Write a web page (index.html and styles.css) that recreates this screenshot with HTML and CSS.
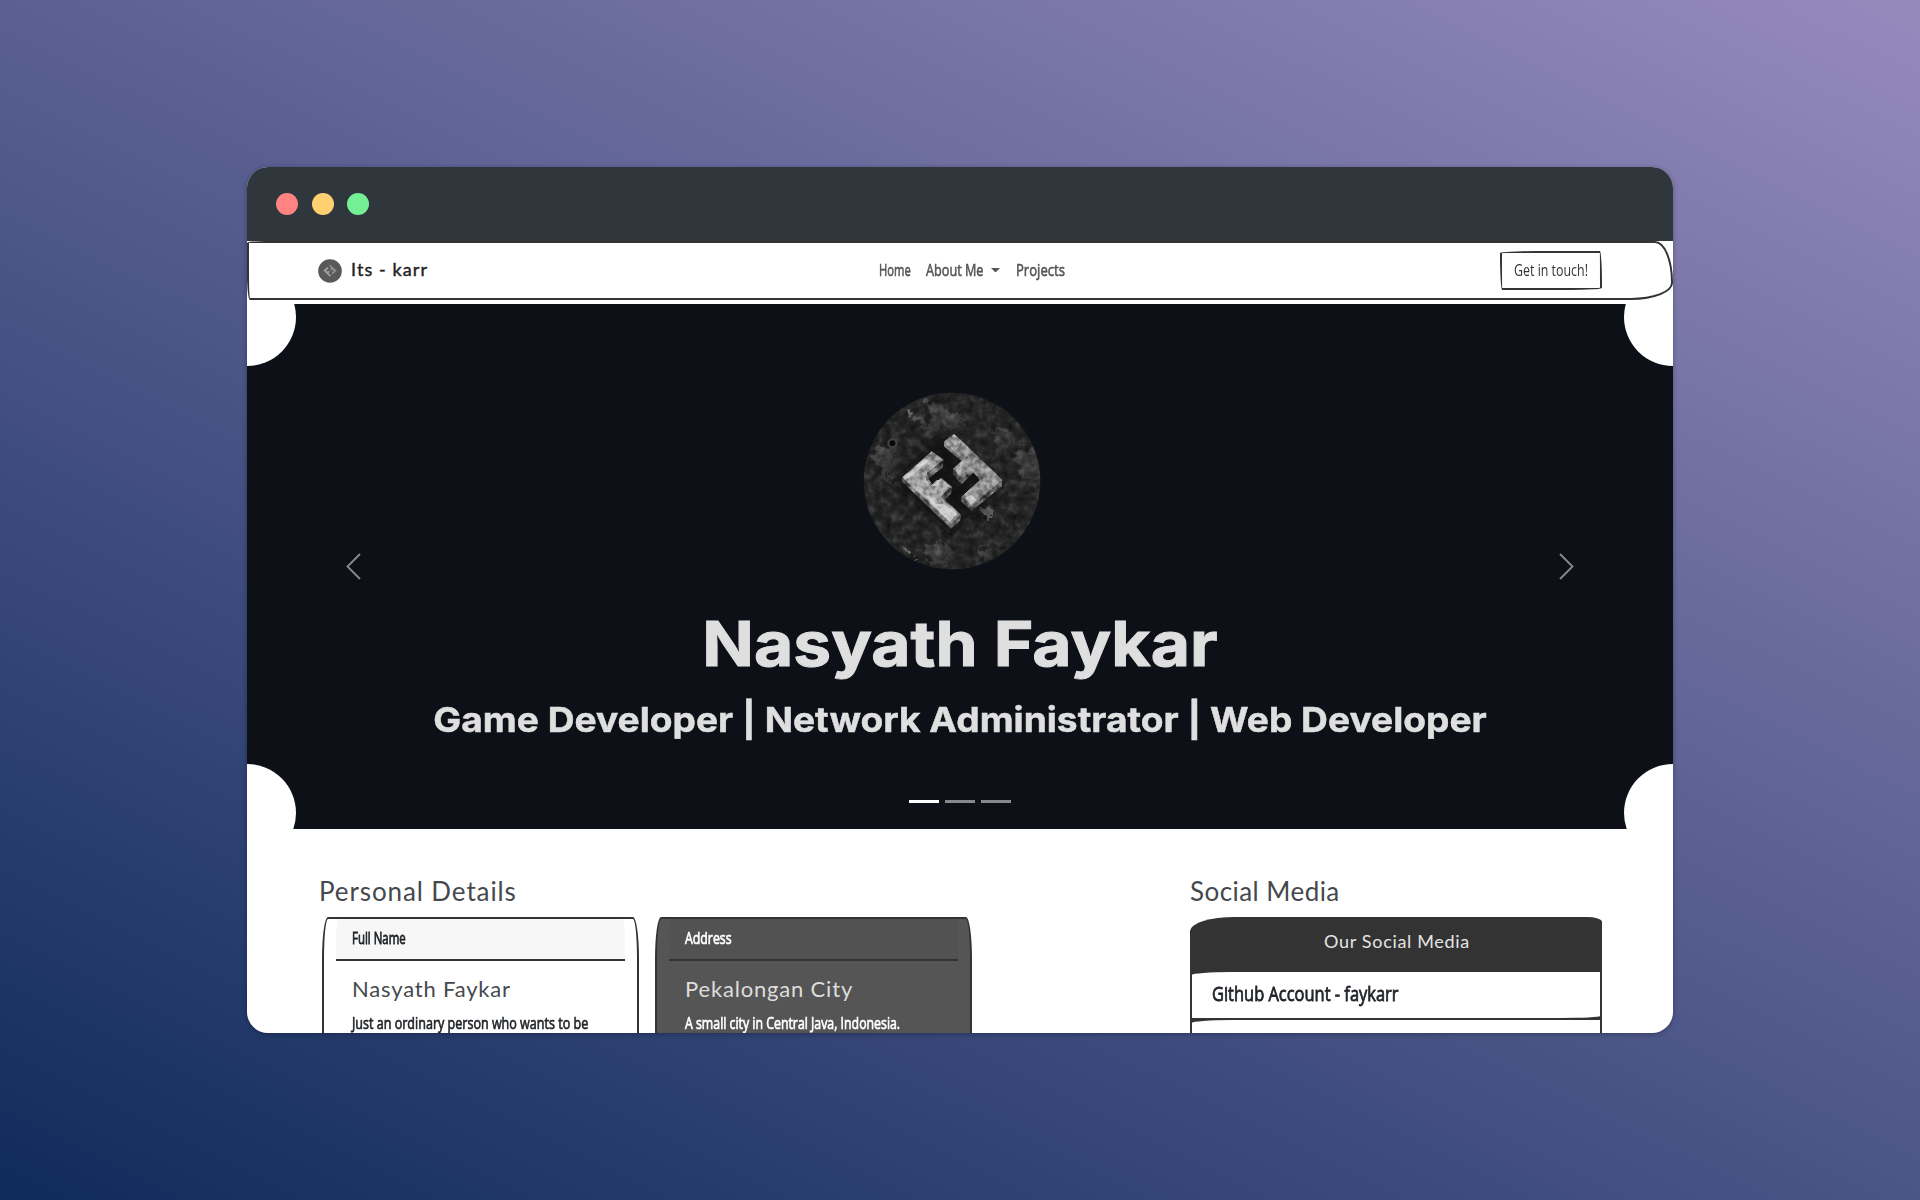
FILE: index.html
```html
<!DOCTYPE html>
<html lang="en">
<head>
<meta charset="utf-8">
<title>Its - karr</title>
<link rel="stylesheet" href="styles.css">
</head>
<body>
<div class="window">
  <div class="titlebar"><i class="dot red"></i><i class="dot yellow"></i><i class="dot green"></i></div>
  <nav class="navbar">
    <a class="brand">
      <svg class="brand-logo" viewBox="38 35 536 536"><circle cx="306" cy="303" r="264" fill="#595959"/><use href="#mark"/></svg>
      <span class="brand-name">Its - karr</span>
    </a>
    <div class="links"><span class="narrow l-home">Home</span><span class="narrow l-about">About Me</span><i class="caret"></i><span class="narrow l-projects">Projects</span></div>
    <a class="touch"><span class="narrow l-touch">Get in touch!</span></a>
  </nav>
  <section class="hero">
    <i class="bite tl"></i><i class="bite tr"></i><i class="bite bl"></i><i class="bite br"></i>
    <svg class="portrait" viewBox="40 37 532 532">
      <defs>
        <clipPath id="round"><circle cx="306" cy="303" r="264"/></clipPath>
        <filter id="stone" x="0" y="0" width="1" height="1" color-interpolation-filters="sRGB">
          <feTurbulence type="fractalNoise" baseFrequency=".04" numOctaves="6" seed="8"/>
          <feColorMatrix values=".7 0 0 0 .13  .7 0 0 0 .13  .7 0 0 0 .13  0 0 0 0 1" result="n"/>
          <feDisplacementMap in="SourceGraphic" in2="n" scale="90" xChannelSelector="R" yChannelSelector="G" result="d"/>
          <feBlend in="n" in2="d" mode="soft-light"/>
        </filter>
        <filter id="metal" x="0" y="0" width="1" height="1" color-interpolation-filters="sRGB">
          <feTurbulence type="fractalNoise" baseFrequency=".05" numOctaves="5" seed="3"/>
          <feColorMatrix values="1.7 0 0 0 -.35  1.7 0 0 0 -.35  1.7 0 0 0 -.35  0 0 0 0 1" result="n"/>
          <feComposite in="n" in2="SourceGraphic" operator="in" result="c"/>
          <feBlend in="c" in2="SourceGraphic" mode="soft-light"/>
        </filter>
        <filter id="soft"><feGaussianBlur stdDeviation="9"/></filter>
        <g id="mark">
          <path fill="#5c5c5c" d="M158 292L245 215L280 238L278 262L235 296L250 318L275 295L305 320L303 340L285 358L332 403L330 420L303 445L158 305Z"/>
          <path fill="#a0a0a0" d="M158 292L245 215L279 240L232 278L228 300L244 320L272 295L304 321L272 349L331 404L304 430Z"/>
          <path fill="#5c5c5c" d="M283 185L312 162L456 300L455 318L365 392L335 365V350L390 300L370 277L335 312L310 285V265L335 243L283 200Z"/>
          <path fill="#8e8e8e" d="M283 185L312 162L456 300L364 377L335 350L390 300L368 273L336 296L310 266L338 241Z"/>
        </g>
      </defs>
      <g clip-path="url(#round)">
        <g filter="url(#stone)">
          <rect x="-40" y="-40" width="700" height="700" fill="#262626"/>
          <path fill="#3c3c3c" d="M230 60L280 75L290 100L330 100L335 130L300 150L270 125L255 155L215 145L200 130L235 110ZM425 140L465 145L490 165L480 195L455 208L430 185ZM495 215L560 195L572 300L510 290L520 260L485 240ZM65 235L85 200L130 210L125 255L100 290L160 310L140 315L85 290L90 255ZM225 490L260 500L280 480L310 515L290 550L235 550ZM385 520L410 500L422 530L400 545Z"/>
          <path fill="#606060" d="M178 95L192 100L188 120L176 112ZM178 518L194 522L186 536ZM392 385L425 380L430 405L400 412Z"/>
        </g>
        <circle cx="128" cy="190" r="12" fill="#080808" stroke="#404040" stroke-width="7"/>
        <path fill="#0a0a0a" opacity=".7" filter="url(#soft)" d="M250 180L300 160L460 320L370 420L340 400L310 470L140 320L160 280L240 200Z"/>
        <g filter="url(#metal)"><use href="#mark"/></g>
        <path fill="#e8e8e8" opacity=".6" d="M205 255L225 238L240 240L190 285L165 300L160 292ZM242 318L260 300L272 300L262 318ZM222 345L240 348L256 372L280 372L322 400L300 425L270 398L245 370ZM306 167L314 164L318 172L308 174ZM345 352L365 345L380 360L362 374Z"/>
      </g>
    </svg>
    <h1>Nasyath Faykar</h1>
    <h2>Game Developer | Network Administrator | Web Developer</h2>
    <svg class="arrow prev" viewBox="0 0 15 27"><path d="M14 1L1.500 13.500L14 26"/></svg>
    <svg class="arrow next" viewBox="0 0 15 27"><path d="M1 1L13.500 13.500L1 26"/></svg>
    <div class="indicators"><i class="on"></i><i></i><i></i></div>
  </section>
  <main class="content">
    <section class="personal">
      <h3 class="t-personal">Personal Details</h3>
      <div class="cards">
        <article class="card">
          <header><span class="narrow t-full">Full Name</span></header>
          <h4>Nasyath Faykar</h4>
          <p class="narrow t-just">Just an ordinary person who wants to be</p>
        </article>
        <article class="card dark">
          <header><span class="narrow t-address">Address</span></header>
          <h4>Pekalongan City</h4>
          <p class="narrow t-small">A small city in Central Java, Indonesia.</p>
        </article>
      </div>
    </section>
    <section class="social">
      <h3 class="t-social">Social Media</h3>
      <div class="list">
        <header><span>Our Social Media</span></header>
        <div class="item"><span class="narrow t-github">Github Account - faykarr</span></div>
        <div class="item"></div>
      </div>
    </section>
  </main>
</div>
</body>
</html>
```
FILE: styles.css
```css
* { box-sizing: border-box; }
body {
  margin: 0;
  width: 1920px;
  height: 1200px;
  overflow: hidden;
  display: flex;
  justify-content: center;
  align-items: center;
  background: linear-gradient(26.300deg, #0f2b5b, #968abd);
  font-family: "Open Sans", sans-serif;
  color: #212529;
}
h1, h2, h3, h4, p { margin: 0; white-space: nowrap; }
span { white-space: nowrap; }
.narrow { display: block; width: max-content; transform-origin: left center; }
.window {
  width: 1426px;
  height: 866px;
  border-radius: 21px;
  overflow: hidden;
  background: #fff;
  box-shadow: 0 1px 5px rgba(0, 0, 0, .3);
}
.titlebar {
  height: 74px;
  padding-left: 29px;
  display: flex;
  align-items: center;
  gap: 13.500px;
  background: #2f363c;
}
.dot { width: 22px; height: 22px; border-radius: 50%; }
.red { background: #ff8383; }
.yellow { background: #ffd070; }
.green { background: #74ef96; }

.navbar {
  height: 59px;
  margin-bottom: 4px;
  padding: 0 69px;
  display: grid;
  grid-template-columns: 1fr auto 1fr;
  align-items: center;
  border: 2px solid #333;
  border-radius: 18px 18px 42px 3px / 2px 41px 17px 25px;
}
.brand { display: flex; align-items: center; gap: 9px; }
.brand-logo { width: 24px; height: 24px; }
.brand-name { font: 400 18px/24px Lato, sans-serif; letter-spacing: 1.100px; color: #222; -webkit-text-stroke: .4px #222; margin-top: -3px; }
.links {
  display: grid;
  grid-template-columns: 47px 65px 25px 49px;
  align-items: center;
  margin-left: 24px;
  margin-top: -2px;
  font-size: 17px;
  line-height: 24px;
  color: #555;
  -webkit-text-stroke: .6px #555;
}
.l-home { transform: scaleX(.66); }
.l-about { transform: scaleX(.745); }
.l-projects { transform: scaleX(.77); }
.caret { width: 9px; border: 4.500px solid transparent; border-top-color: #555; border-bottom: 0; }
.touch {
  justify-self: end;
  width: 102px;
  height: 39px;
  padding: 0 0 2px 12px;
  display: flex;
  align-items: center;
  border: 2px solid #333;
  border-radius: 255px 15px 225px 15px / 15px 225px 15px 255px;
  font-size: 17px;
  color: #333;
}
.l-touch { transform: scaleX(.73); }

.hero {
  position: relative;
  height: 525px;
  padding-top: 88px;
  overflow: hidden;
  display: flex;
  flex-direction: column;
  align-items: center;
  background: #0d1117;
  color: #dfdfdf;
}
.bite { position: absolute; width: 98px; height: 98px; border-radius: 50%; background: #fff; }
.tl { left: -49px; top: -36px; }
.tr { right: -49px; top: -36px; }
.bl { left: -49px; bottom: -33px; }
.br { right: -49px; bottom: -33px; }
.portrait { width: 178px; height: 178px; margin-right: 16px; }
.hero h1 { margin-top: 36px; font: 700 62px/76px Inter, sans-serif; transform: scaleX(1.092); -webkit-text-stroke: 1px; }
.hero h2 { margin-top: 16px; font: 700 34.500px/44px Inter, sans-serif; transform: scaleX(1.077); -webkit-text-stroke: .5px; }
.arrow { position: absolute; top: 249px; width: 15px; height: 27px; fill: none; stroke: #86888b; stroke-width: 1.900; }
.prev { left: 99px; }
.next { right: 99px; }
.indicators { position: absolute; bottom: 26px; display: flex; gap: 6px; }
.indicators i { width: 30px; height: 3px; background: #86888b; }
.indicators .on { background: #fff; }

.content { display: flex; justify-content: space-between; padding: 45px 71px 0 72px; }
h3, h4 { font-family: Lato, sans-serif; font-weight: 400; color: #45494d; }
h3 { font-size: 26px; line-height: 34px; }
.t-personal { letter-spacing: .900px; }
.t-social { letter-spacing: .450px; }
.cards { display: flex; gap: 16px; margin: 9px 0 0 3px; }
.card {
  width: 317px;
  height: 240px;
  padding: 0 12px;
  border: 2px solid #333;
  border-radius: 6px 6px 0 0 / 42px 42px 0 0;
}
.card header {
  height: 42px;
  padding: 0 15px 2px 16px;
  display: flex;
  align-items: center;
  background: #f7f7f7;
  border-bottom: 2px solid #333;
  border-radius: 3px 3px 0 0 / 20px 20px 0 0;
  font-size: 16px;
  -webkit-text-stroke: .8px #212529;
}
.t-full { transform: scaleX(.715); }
.t-address { transform: scaleX(.77); }
.card h4 { margin: 14px 15px 0 16px; font-size: 22px; line-height: 28px; letter-spacing: .820px; }
.card p { margin: 8px 15px 0 16px; font-size: 17px; line-height: 24px; -webkit-text-stroke: .7px; }
.t-just { transform: scaleX(.738); }
.t-small { transform: scaleX(.725); }
.dark { background: #555; color: #fff; }
.dark header { background: #525252; -webkit-text-stroke: .7px #fff; }
.dark h4 { color: #ddd; }
.social { width: 412px; }
.list { margin-top: 9px; height: 240px; overflow: hidden; background: #333; border-radius: 45px 15px 0 0 / 14px 5px 0 0; }
.list header { height: 55px; padding: 11px 0 0 2px; text-align: center; font: 18px/26px Lato, sans-serif; letter-spacing: .680px; color: #e4e4e4; }
.item {
  height: 46px;
  margin: 0 2px 2px;
  padding: 0 20px;
  display: flex;
  align-items: center;
  background: #fff;
  border-radius: 40px 0 40px 0 / 3px 0 2px 0;
  font-size: 20px;
  line-height: 26px;
  -webkit-text-stroke: .8px;
}
.t-github { transform: scaleX(.822); margin-top: -2px; }
```
